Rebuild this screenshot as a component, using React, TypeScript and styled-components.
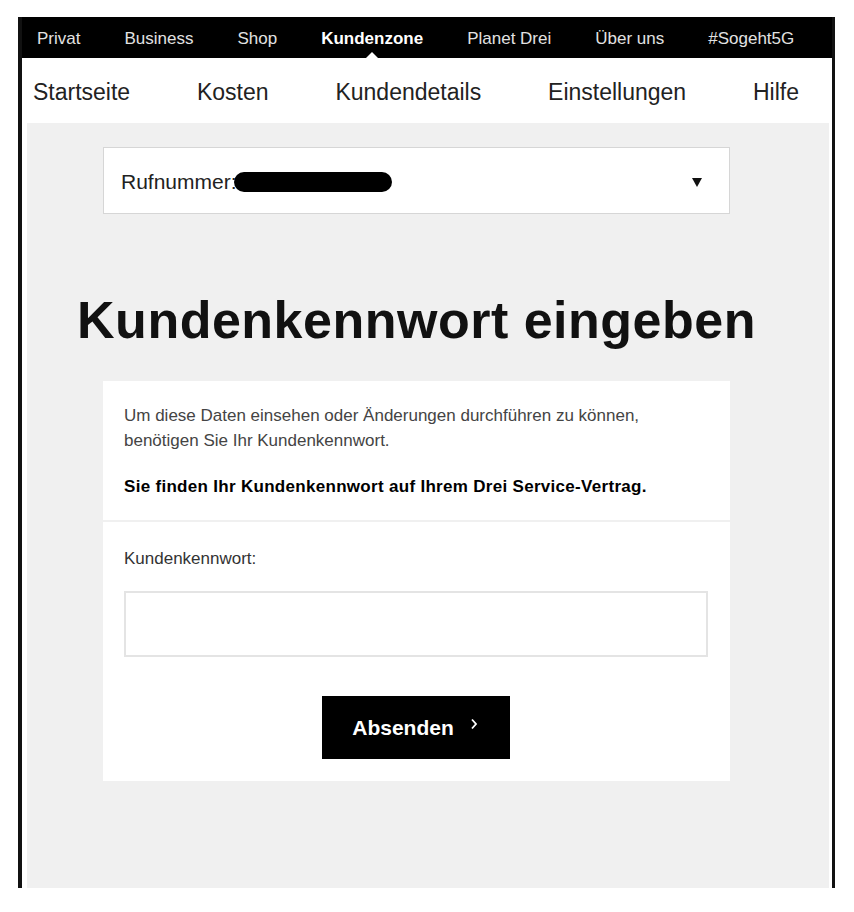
import React from "react";
import styled, { createGlobalStyle } from "styled-components";

const GlobalStyle = createGlobalStyle`
  body {
    margin: 0;
    background: #ffffff;
    font-family: "Liberation Sans", Arial, sans-serif;
    color: #222;
  }
  * {
    box-sizing: border-box;
  }
`;

const Frame = styled.div`
  display: flex;
  flex-direction: column;
  margin: 17px 0 0 18px;
  width: 817px;
  height: 871px;
  border-left: 4px solid #111;
  border-right: 3px solid #111;
  background: #fff;
`;

const TopBar = styled.nav`
  display: flex;
  align-items: stretch;
  gap: 44px;
  height: 41px;
  padding: 2px 0 0 15px;
  background: #000;
`;

const TopItem = styled.a<{ $active?: boolean }>`
  position: relative;
  display: flex;
  align-items: center;
  font-size: 17px;
  font-weight: ${(p) => (p.$active ? 700 : 400)};
  color: ${(p) => (p.$active ? "#fff" : "#e2e2e2")};
  text-decoration: none;
`;

const Caret = styled.span`
  position: absolute;
  bottom: 0;
  left: 50%;
  transform: translateX(-50%);
  width: 0;
  height: 0;
  border-left: 6px solid transparent;
  border-right: 6px solid transparent;
  border-bottom: 6px solid #fff;
`;

const SubBar = styled.nav`
  display: flex;
  align-items: center;
  justify-content: space-between;
  height: 65px;
  padding: 4px 33px 0 11px;
  background: #fff;
`;

const SubItem = styled.a`
  font-size: 23px;
  color: #222;
  text-decoration: none;
`;

const Main = styled.main`
  flex: 1;
  margin: 0 3px 0 5px;
  padding: 24px 0 0 76px;
  background: #f0f0f0;
`;

const Column = styled.div`
  display: flex;
  flex-direction: column;
  align-items: center;
  width: 627px;
`;

const Select = styled.div`
  display: flex;
  align-items: center;
  justify-content: space-between;
  width: 100%;
  height: 67px;
  padding: 3px 27px 0 17px;
  background: #fff;
  border: 1px solid #d6d6d6;
`;

const SelectLabel = styled.span`
  display: flex;
  align-items: center;
  font-size: 21px;
  color: #222;
`;

const Redacted = styled.span`
  display: inline-block;
  width: 158px;
  height: 20px;
  margin-left: -3px;
  border-radius: 10px;
  background: #000;
`;

const Arrow = styled.span`
  width: 0;
  height: 0;
  border-left: 5px solid transparent;
  border-right: 5px solid transparent;
  border-top: 9px solid #111;
`;

const Heading = styled.h1`
  margin: 76px 0 31px;
  white-space: nowrap;
  font-size: 52px;
  line-height: 60px;
  letter-spacing: 0.5px;
  font-weight: 700;
  color: #111;
`;

const Card = styled.section`
  width: 100%;
  background: #fff;
`;

const CardSection = styled.div<{ $divider?: boolean }>`
  display: flex;
  flex-direction: column;
  padding: ${(p) => (p.$divider ? "22px 21px 21px" : "24px 22px 22px 21px")};
  border-bottom: ${(p) => (p.$divider ? "2px solid #f0f0f0" : "none")};
`;

const Text = styled.p<{ $strong?: boolean }>`
  margin: ${(p) => (p.$strong ? "21px 0 0" : "0")};
  font-size: 17px;
  line-height: 25px;
  font-weight: ${(p) => (p.$strong ? 700 : 400)};
  letter-spacing: ${(p) => (p.$strong ? "0.3px" : "0")};
  color: ${(p) => (p.$strong ? "#000" : "#444")};
`;

const Label = styled.label`
  font-size: 17px;
  line-height: 25px;
  color: #333;
`;

const Input = styled.input`
  height: 66px;
  margin-top: 20px;
  border: 2px solid #e4e4e4;
  background: #fff;
  font-size: 17px;
  outline: none;
`;

const SubmitButton = styled.button`
  display: flex;
  align-items: center;
  justify-content: center;
  gap: 16px;
  align-self: center;
  width: 188px;
  height: 63px;
  margin-top: 39px;
  padding-left: 4px;
  border: none;
  background: #000;
  color: #fff;
  font-family: "Liberation Sans", Arial, sans-serif;
  font-size: 21px;
  font-weight: 700;
  cursor: pointer;
`;

const Chevron = styled.svg`
  margin-top: -8px;
`;

const topLinks = ["Privat", "Business", "Shop", "Kundenzone", "Planet Drei", "Über uns", "#Sogeht5G"];
const subLinks = ["Startseite", "Kosten", "Kundendetails", "Einstellungen", "Hilfe"];

const App: React.FC = () => {
  return (
    <>
      <GlobalStyle />
      <Frame>
        <TopBar>
          {topLinks.map((link) => (
            <TopItem key={link} $active={link === "Kundenzone"}>
              {link}
              {link === "Kundenzone" && <Caret />}
            </TopItem>
          ))}
        </TopBar>
        <SubBar>
          {subLinks.map((link) => (
            <SubItem key={link}>{link}</SubItem>
          ))}
        </SubBar>
        <Main>
          <Column>
            <Select>
              <SelectLabel>
                Rufnummer:
                <Redacted />
              </SelectLabel>
              <Arrow />
            </Select>
            <Heading>Kundenkennwort eingeben</Heading>
            <Card>
              <CardSection $divider>
                <Text>
                  Um diese Daten einsehen oder Änderungen durchführen zu können,
                  <br />
                  benötigen Sie Ihr Kundenkennwort.
                </Text>
                <Text $strong>Sie finden Ihr Kundenkennwort auf Ihrem Drei Service-Vertrag.</Text>
              </CardSection>
              <CardSection>
                <Label htmlFor="kennwort">Kundenkennwort:</Label>
                <Input id="kennwort" type="password" />
                <SubmitButton type="submit">
                  Absenden
                  <Chevron width="8" height="12" viewBox="0 0 8 12">
                    <path d="M2 1.5 L6 6 L2 10.5" fill="none" stroke="#fff" strokeWidth="1.8" />
                  </Chevron>
                </SubmitButton>
              </CardSection>
            </Card>
          </Column>
        </Main>
      </Frame>
    </>
  );
};

export default App;
